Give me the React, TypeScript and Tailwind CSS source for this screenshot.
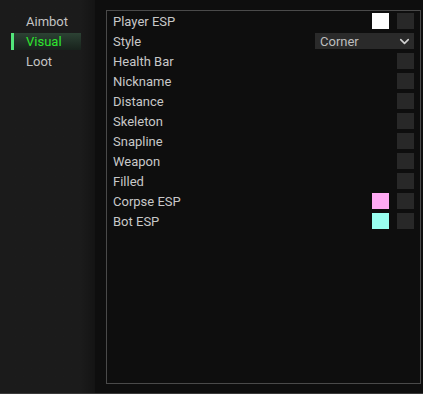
import {ChevronDown} from 'lucide-react';

type Row = {label: string; color?: string; combo?: string; check?: boolean};

const rows: Row[] = [
  {label: 'Player ESP', color: 'bg-[#ffffff]', check: true},
  {label: 'Style', combo: 'Corner'},
  {label: 'Health Bar', check: true},
  {label: 'Nickname', check: true},
  {label: 'Distance', check: true},
  {label: 'Skeleton', check: true},
  {label: 'Snapline', check: true},
  {label: 'Weapon', check: true},
  {label: 'Filled', check: true},
  {label: 'Corpse ESP', color: 'bg-[#ffaaf4]', check: true},
  {label: 'Bot ESP', color: 'bg-[#99fff0]', check: true}
];

const tabs = ['Aimbot', 'Visual', 'Loot'];

export default function App() {
  return (
    <div
      className="flex h-[394px] w-[423px] border-b border-[#3a3a3a] bg-[#0e0e0e] text-[13px] leading-none"
      style={{fontFamily: 'Roboto, "Liberation Sans", sans-serif'}}
    >
      <aside className="flex w-[95px] shrink-0 flex-col gap-[3px] bg-gradient-to-r from-[#1b1b1b] from-85% to-[#141414] pt-[13px]">
        {tabs.map((tab) =>
          tab === 'Visual' ? (
            <div
              className="ml-[11px] flex h-[17px] w-[70px] items-center border-l-[3px] border-[#52e67a] bg-gradient-to-b from-[#2c4234] to-[#18221c] pl-[12px] text-[#2ee62e]"
              key={tab}
            >
              {tab}
            </div>
          ) : (
            <div className="flex h-[17px] items-center pl-[26px] text-[#c4c4c4]" key={tab}>
              {tab}
            </div>
          )
        )}
      </aside>

      <main className="flex flex-1 pb-[9px] pl-[11px] pr-[2px] pt-[10px]">
        <div className="flex-1 border border-[#4a4a4a] bg-[#0e0e0e] pr-[6px]">
          {rows.map((row) => (
            <div className="flex h-[20px] items-center pl-[6px]" key={row.label}>
              <span className="flex-1 text-[#c8c8c8]">{row.label}</span>
              {row.combo ? (
                <div className="flex h-[16px] w-[99px] items-center justify-between bg-[#2a2a2a] pl-[5px] pr-[2px] text-[#bdbdbd]">
                  <span>{row.combo}</span>
                  <ChevronDown className="text-[#d0d0d0]" size={15} strokeWidth={2.6} />
                </div>
              ) : null}
              {row.color ? <div className={`mr-[8px] h-[16px] w-[17px] ${row.color}`} /> : null}
              {row.check ? <div className="h-[16px] w-[17px] bg-[#282828]" /> : null}
            </div>
          ))}
        </div>
      </main>
    </div>
  );
}
